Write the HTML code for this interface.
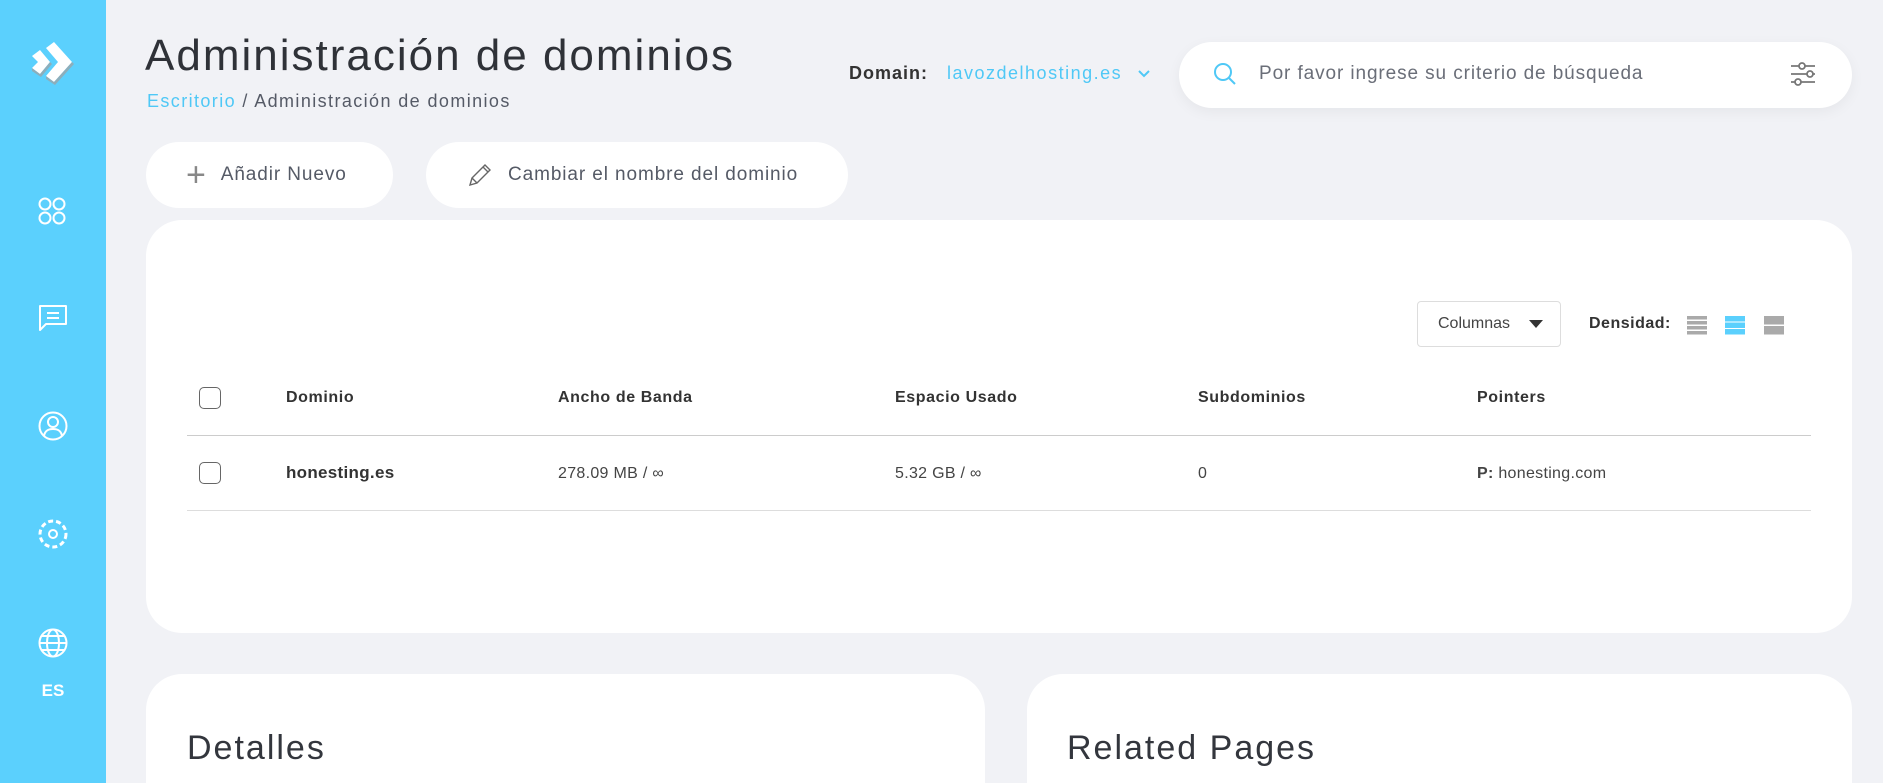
<!DOCTYPE html>
<html style="overflow:hidden;width:1883px;height:783px"><head><meta charset="utf-8"><style>
*{margin:0;padding:0;box-sizing:border-box}
body{width:1883px;height:783px;overflow:hidden;background:#f1f2f6;font-family:"Liberation Sans",sans-serif;color:#33363d;position:relative}
.abs{position:absolute}
.side{left:0;top:0;width:106px;height:783px;background:#5bd0fd}
.card{background:#fff;border-radius:36px}
.pill{background:#fff;border-radius:34px;height:66px;top:142px;display:flex;align-items:center;font-size:19px;color:#555a66;letter-spacing:.9px}
.h{font-size:16px;font-weight:bold;color:#333;top:389px;letter-spacing:.6px}
.c{font-size:16px;color:#444;top:465px;letter-spacing:.3px}
.cb{width:22px;height:22px;border:1.5px solid #666;border-radius:5px;left:199px;background:#fff}
.line{left:187px;width:1624px;height:1px;background:#ddd}
</style></head><body>
<div class="abs side">
<svg class="abs" style="left:28px;top:40px" width="50" height="50" viewBox="0 0 50 50"><path d="M4 16 L12 10 L22 22 L12 34 L4 28 L10 22Z" fill="#fff"/><path d="M18 8 L26 2 L44 22 L26 42 L18 36 L30 22Z" fill="#fff"/><path d="M18 36 L26 42 L44 22 L46 24 L27 45 L18 39Z" fill="#9aa5aa" opacity=".8"/><path d="M4 28 L12 34 L22 22 L24 24 L13 37 L4 31Z" fill="#9aa5aa" opacity=".8"/></svg>
<svg class="abs" style="left:36px;top:195px" width="32" height="32" viewBox="0 0 32 32" fill="none" stroke="#fff" stroke-width="2"><circle cx="9" cy="9" r="5.5"/><circle cx="23" cy="9" r="5.5"/><circle cx="9" cy="23" r="5.5"/><circle cx="23" cy="23" r="5.5"/></svg>
<svg class="abs" style="left:37px;top:303px" width="32" height="30" viewBox="0 0 32 30" fill="none" stroke="#fff" stroke-width="2"><path d="M3 3H29V21H9L3 27Z" stroke-linejoin="round"/><path d="M10 10H22M10 15H22"/></svg>
<svg class="abs" style="left:37px;top:410px" width="32" height="32" viewBox="0 0 32 32" fill="none" stroke="#fff" stroke-width="2"><circle cx="16" cy="16" r="13.5"/><circle cx="16" cy="12" r="5"/><path d="M7 26C8 20 12 19 16 19S24 20 25 26"/></svg>
<svg class="abs" style="left:36px;top:517px" width="34" height="34" viewBox="0 0 34 34" fill="none" stroke="#fff" stroke-width="3" stroke-dasharray="5 3"><circle cx="17" cy="17" r="13"/><circle cx="17" cy="17" r="4" stroke-width="2" stroke-dasharray="none"/></svg>
<svg class="abs" style="left:37px;top:627px" width="32" height="32" viewBox="0 0 32 32" fill="none" stroke="#fff" stroke-width="2"><circle cx="16" cy="16" r="13.5"/><ellipse cx="16" cy="16" rx="6" ry="13.5"/><path d="M2.5 16H29.5M5 9H27M5 23H27"/></svg>
<div class="abs" style="left:0;width:106px;top:681px;text-align:center;color:#fff;font-weight:bold;font-size:17px">ES</div>
</div>

<div class="abs" style="left:145px;top:31px;font-size:44px;color:#2f3238;letter-spacing:2px">Administración de dominios</div>
<div class="abs" style="left:147px;top:91px;font-size:18px;color:#555a66;letter-spacing:1.4px"><span style="color:#4fc8f6">Escritorio</span> / Administración de dominios</div>

<div class="abs" style="left:849px;top:63px;font-size:18px;font-weight:bold;color:#333;letter-spacing:1px">Domain:</div>
<div class="abs" style="left:947px;top:63px;font-size:18px;color:#4fc8f6;letter-spacing:1.5px">lavozdelhosting.es</div>
<svg class="abs" style="left:1136px;top:68px" width="16" height="12" viewBox="0 0 16 12"><path d="M3 3L8 8L13 3" fill="none" stroke="#4fc8f6" stroke-width="2"/></svg>

<div class="abs" style="left:1179px;top:42px;width:673px;height:66px;background:#fff;border-radius:33px;box-shadow:0 4px 14px rgba(0,0,0,.05)"></div>
<svg class="abs" style="left:1212px;top:61px" width="26" height="26" viewBox="0 0 26 26" fill="none" stroke="#4fc8f6" stroke-width="2"><circle cx="11" cy="11" r="8"/><path d="M17 17L23 23"/></svg>
<div class="abs" style="left:1259px;top:63px;font-size:19px;color:#6a6e78;letter-spacing:.9px">Por favor ingrese su criterio de búsqueda</div>
<svg class="abs" style="left:1788px;top:59px" width="30" height="30" viewBox="0 0 30 30" fill="none" stroke="#777" stroke-width="1.8"><path d="M3 7H11M17 7H27M3 15H19M25 15H27M3 23H7M13 23H27"/><circle cx="14" cy="7" r="3"/><circle cx="22" cy="15" r="3"/><circle cx="10" cy="23" r="3"/></svg>

<div class="abs pill" style="left:146px;width:247px;padding-left:40px"><span style="font-size:34px;font-weight:100;color:#888;margin-right:14px;line-height:1">+</span>Añadir Nuevo</div>
<div class="abs pill" style="left:426px;width:422px;padding-left:40px"><svg width="28" height="28" viewBox="0 0 28 28" fill="none" stroke="#666" stroke-width="1.4" style="margin-right:14px"><path d="M4 24L6 17L19 4L24 9L11 22Z M6 17L11 22 M17 6L22 11"/></svg>Cambiar el nombre del dominio</div>

<div class="abs card" style="left:146px;top:220px;width:1706px;height:413px"></div>
<div class="abs" style="left:1417px;top:301px;width:144px;height:46px;border:1px solid #ddd;border-radius:4px;background:#fff;font-size:16px;color:#444;padding:13px 0 0 20px">Columnas<svg style="position:absolute;left:110px;top:17px" width="16" height="10" viewBox="0 0 16 10"><path d="M1 1H15L8 9Z" fill="#333"/></svg></div>
<div class="abs" style="left:1589px;top:315px;font-size:16px;font-weight:bold;color:#333;letter-spacing:.5px">Densidad:</div>
<svg class="abs" style="left:1687px;top:315px" width="100" height="22" viewBox="0 0 100 22"><g fill="#aaa"><rect x="0" y="1" width="20" height="3.5"/><rect x="0" y="6" width="20" height="3.5"/><rect x="0" y="11" width="20" height="3.5"/><rect x="0" y="16" width="20" height="3.5"/></g><g fill="#5bd0fd"><rect x="38" y="1" width="20" height="5.5"/><rect x="38" y="7.5" width="20" height="5.5"/><rect x="38" y="14" width="20" height="5.5"/></g><g fill="#aaa"><rect x="77" y="1" width="20" height="8.5"/><rect x="77" y="11" width="20" height="8.5"/></g></svg>

<div class="abs cb" style="top:387px"></div>
<div class="abs h" style="left:286px">Dominio</div>
<div class="abs h" style="left:558px">Ancho de Banda</div>
<div class="abs h" style="left:895px">Espacio Usado</div>
<div class="abs h" style="left:1198px">Subdominios</div>
<div class="abs h" style="left:1477px">Pointers</div>
<div class="abs line" style="top:435px;background:#ccc"></div>
<div class="abs cb" style="top:462px"></div>
<div class="abs c" style="left:286px;font-weight:bold;color:#333;font-size:17px;top:463px">honesting.es</div>
<div class="abs c" style="left:558px">278.09 MB / ∞</div>
<div class="abs c" style="left:895px">5.32 GB / ∞</div>
<div class="abs c" style="left:1198px">0</div>
<div class="abs c" style="left:1477px"><b>P:</b> honesting.com</div>
<div class="abs line" style="top:510px"></div>

<div class="abs" style="left:146px;top:674px;width:839px;height:109px;background:#fff;border-radius:36px 36px 0 0"></div>
<div class="abs" style="left:1027px;top:674px;width:825px;height:109px;background:#fff;border-radius:36px 36px 0 0"></div>
<div class="abs" style="left:187px;top:728px;font-size:34px;line-height:40px;color:#33363d;letter-spacing:2px">Detalles</div>
<div class="abs" style="left:1067px;top:728px;font-size:34px;line-height:40px;color:#33363d;letter-spacing:2px">Related Pages</div>
</body></html>
